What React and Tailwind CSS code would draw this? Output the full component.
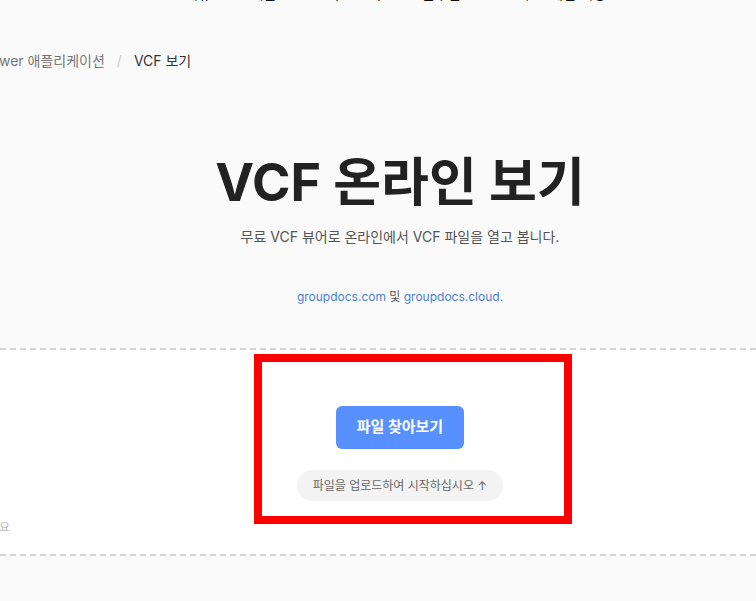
import React from "react";

const font = { fontFamily: '"Inter", "Noto Sans CJK KR", sans-serif' };

export default function App() {
    return (
        <div className="w-[756px] h-[601px] overflow-hidden bg-[#fafafa] relative" style={font}>
            {/* Top nav, mostly scrolled out of view */}
            <div className="h-0 relative">
                <div className="absolute -top-[16px] left-0 flex text-[14px] leading-5 text-[#111]">
                    <span className="ml-[185px]">메뉴</span>
                    <span className="ml-[40px]">제품</span>
                    <span className="ml-[50px]">리소스 가</span>
                    <span className="ml-[40px]">솔루션</span>
                    <span className="ml-[60px]">무료 체험 계정</span>
                </div>
            </div>

            {/* Hero */}
            <section className="h-[350px] border-b-2 border-dashed border-[#d4d4d4]">
                <nav className="pt-[51px] flex items-center text-[14px] leading-5 -ml-[22px]">
                    <span className="text-[#777]">Viewer 애플리케이션</span>
                    <span className="text-[#ccc] mx-[12px]">/</span>
                    <span className="text-[#333]">VCF 보기</span>
                </nav>
                <div className="pl-[44px] flex flex-col items-center">
                    <h1 className="mt-[82px] text-[52px] leading-[60px] font-bold text-[#222]">
                        VCF 온라인 보기
                    </h1>
                    <p className="mt-[14px] text-[14px] leading-5 text-[#555]">
                        무료 VCF 뷰어로 온라인에서 VCF 파일을 열고 봅니다.
                    </p>
                    <p className="mt-[40px] text-[12px] leading-5 text-[#555]">
                        <span className="text-[#4b7fdc]">groupdocs.com</span> 및{" "}
                        <span className="text-[#4b7fdc]">groupdocs.cloud</span>
                        <span className="text-[#4b7fdc]">.</span>
                    </p>
                </div>
            </section>

            {/* Upload area */}
            <section className="h-[206px] bg-white border-b-2 border-dashed border-[#d4d4d4] relative">
                <div className="pl-[44px] flex flex-col items-center">
                    <button className="mt-[56px] w-[128px] h-[43px] rounded-[6px] bg-[#5890ff] text-white text-[15px] font-bold">
                        파일 찾아보기
                    </button>
                    <div className="mt-[21px] h-[31px] px-[16px] rounded-full bg-[#f3f3f3] text-[12px] text-[#666] flex items-center">
                        파일을 업로드하여 시작하십시오 ↑
                    </div>
                </div>
                <div className="absolute left-0 top-[170px] text-[12px] leading-4 text-[#bbb] whitespace-nowrap -translate-x-[calc(100%-10px)]">
                    자세히 알아보세요
                </div>
                {/* highlight box */}
                <div className="absolute left-[254px] top-[4px] w-[318px] h-[170px] border-[8px] border-[#ff0000]"></div>
            </section>
        </div>
    );
}
